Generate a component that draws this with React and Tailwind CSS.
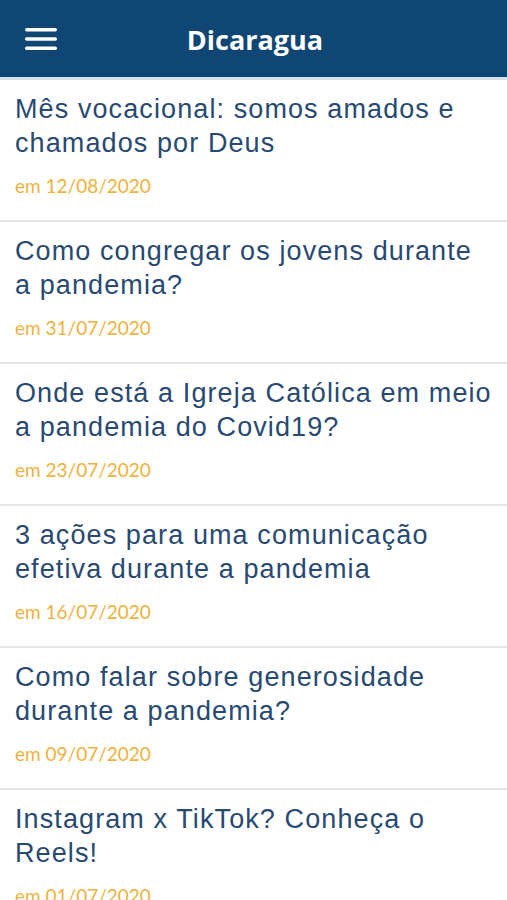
export default function App() {
  const items = [
    ["Mês vocacional: somos amados e chamados por Deus", "em 12/08/2020"],
    ["Como congregar os jovens durante a pandemia?", "em 31/07/2020"],
    ["Onde está a Igreja Católica em meio a pandemia do Covid19?", "em 23/07/2020"],
    ["3 ações para uma comunicação efetiva durante a pandemia", "em 16/07/2020"],
    ["Como falar sobre generosidade durante a pandemia?", "em 09/07/2020"],
    ["Instagram x TikTok? Conheça o Reels!", "em 01/07/2020"],
  ];
  return (
    <div className="w-[507px] h-[900px] overflow-hidden bg-white">
      <div className="h-[80px] bg-[#0f4674] flex items-center relative border-b-[3px] border-[#d5e0e8]">
        <svg className="absolute left-[25px] top-[27px]" width="32" height="24" viewBox="0 0 32 24">
          <rect x="0" y="1" width="32" height="3.5" rx="1.7" fill="white" />
          <rect x="0" y="10.2" width="32" height="3.5" rx="1.7" fill="white" />
          <rect x="0" y="19.4" width="32" height="3.5" rx="1.7" fill="white" />
        </svg>
        <div className="w-full text-center text-white font-bold text-[27px] leading-none pl-[3px] pt-[2px]" style={{ fontFamily: '"Open Sans", sans-serif' }}>
          Dicaragua
        </div>
      </div>
      {items.map(([t, d], i) => (
        <div key={i} className="pl-[15px] pr-[15px] pt-[12px] pb-[22px] border-b-2 border-[#e6e6e6]">
          <div className="text-[27px] leading-[34px] tracking-[1.1px] text-[#284a72]" style={{ fontFamily: '"Liberation Sans", Arial, sans-serif' }}>
            {t}
          </div>
          <div className="mt-[14px] text-[19px] leading-[24px] text-[#f0b13c]" style={{ fontFamily: 'Lato, sans-serif' }}>
            {d}
          </div>
        </div>
      ))}
    </div>
  );
}
